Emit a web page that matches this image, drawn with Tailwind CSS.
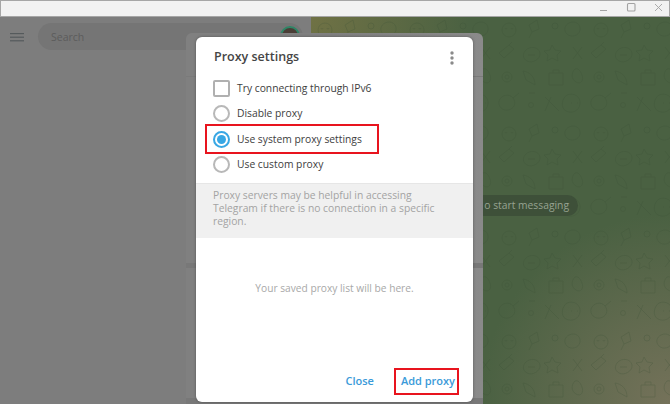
<!DOCTYPE html>
<html lang="en">
<head>
  <meta charset="UTF-8" />
  <title>Proxy settings</title>
  <script src="https://cdn.jsdelivr.net/npm/@tailwindcss/browser@4"></script>
</head>
<body class="w-[670px] h-[404px] overflow-hidden relative font-['Open_Sans',sans-serif] bg-[#7d7d7d]">

  <!-- window title bar -->
  <div class="h-[17px] bg-[#f2f2f2] border border-[#a6a6a6] flex justify-end items-center">
    <svg width="80" height="15" viewBox="0 0 80 15" fill="none" stroke="#a3a3a3" class="mr-[1px]">
      <path d="M12 9.5h7" stroke-width="1"/>
      <rect x="39.5" y="2.5" width="7.5" height="7.5" rx="1" stroke-width="1.1"/>
      <path d="M67 3l7 7M74 3l-7 7" stroke-width="0.9"/>
    </svg>
  </div>

  <div class="flex h-[387px]">
    <!-- left panel -->
    <div class="w-[311px] relative bg-[#7d7d7d] flex items-start pt-[6px] pl-[10px]">
      <svg width="14" height="12" viewBox="0 0 14 12" class="mt-[10px]" fill="#555a5c">
        <rect x="0" y="0" width="14" height="1.2"/>
        <rect x="0" y="3.6" width="14" height="1.2"/>
        <rect x="0" y="7.2" width="14" height="1.2"/>
      </svg>
      <div class="ml-[14px] w-[265px] h-[27px] rounded-full bg-[#757575] flex items-center pl-[13px] pt-[2px] text-[10.5px] text-[#5c5c5c]">Search</div>
      <div class="absolute left-[280px] top-[9px] w-[20px] h-[20px] rounded-full border-2 border-[#2f8566] bg-[#4a3d36]"></div>
    </div>
    <!-- chat background -->
    <div class="flex-1 relative overflow-hidden bg-[radial-gradient(circle_at_100%_100%,#75725a_0%,rgba(117,114,90,0)_36%),radial-gradient(circle_at_0%_0%,#707245_0%,rgba(112,114,69,0)_30%),linear-gradient(#4a6142,#4a6142)]">
      <svg class="absolute inset-0" width="359" height="387" fill="none" stroke="#3a5035" stroke-width="0.6" opacity="0.4">
        <defs>
          <pattern id="doodles" width="92" height="104" patternUnits="userSpaceOnUse">
            <circle cx="14" cy="13" r="7"/><path d="M10 11a1 1 0 0 0 2 0M16 11a1 1 0 0 0 2 0"/>
            <path d="M34 8l8-5 2 9-7 3zM37 15l-3 6"/>
            <circle cx="60" cy="9" r="3"/>
            <path d="M74 6c6-3 12 1 11 7s-9 8-13 4-2-9 2-11z"/>
            <path d="M4 36l10-8 5 4-10 9zM14 28l3-3"/>
            <path d="M30 34c5-6 14-4 15 2s-8 11-13 8-4-7-2-10zM33 38h7"/>
            <path d="M57 28l3 5 6 1-4 4 1 6-6-3-5 3 1-6-4-4 6-1z"/>
            <path d="M78 30l9 12M87 30l-9 12"/>
            <circle cx="12" cy="60" r="5"/><circle cx="12" cy="60" r="2"/>
            <path d="M28 54c7 1 12 6 12 14M28 54l3 9 9 5"/>
            <path d="M54 56h14v12h-14zM58 56v-3h6v3"/>
            <path d="M80 52c-4 4-4 10 1 13s8-2 6-7-4-7-7-6z"/>
            <path d="M4 84c2-6 10-8 14-3s1 11-5 12-10-4-9-9zM18 81l6-5"/>
            <circle cx="36" cy="88" r="2.5"/><path d="M34 76h6"/>
            <path d="M50 80l14 14M50 94l6-14"/>
            <path d="M72 78c7-3 14 2 13 9s-8 10-14 7-4-13 1-16zM76 86h1M82 86h1"/>
          </pattern>
        </defs>
        <rect width="359" height="387" fill="url(#doodles)" stroke="none"/>
      </svg>
      <div class="absolute left-[160px] top-[178px] w-[107px] h-[21px] rounded-full bg-[#3e5039] flex items-center justify-end pr-[9px] text-[10.3px] font-medium text-[#97a391]">o start messaging</div>
    </div>
  </div>

  <!-- settings box behind the dialog -->
  <div class="absolute left-[186px] top-[33px] w-[297px] h-[371px] rounded-t-[6px] bg-[linear-gradient(90deg,#808080_0%,#808080_50%,#8a8a8a_100%)]">
    <div class="absolute left-0 right-0 top-[43px] h-px bg-[#7a7a7a]"></div>
    <div class="absolute left-0 right-0 top-[230px] h-[5px] bg-[#787878]"></div>
    <div class="absolute left-0 right-0 bottom-0 h-[6px] bg-[#787878]"></div>
  </div>

  <!-- proxy dialog -->
  <div class="absolute left-[196px] top-[37px] w-[277px] h-[365px] bg-white rounded-[6px] shadow-[0_0_3px_rgba(0,0,0,0.35)] flex flex-col">
    <div class="h-[37px] flex items-center justify-between pl-[18px] pr-[18px]">
      <h1 class="mt-[3px] text-[12.5px] font-semibold text-[#454545]">Proxy settings</h1>
      <svg width="4" height="14" viewBox="0 0 4 14" fill="#8a8a8a" class="mt-[5px] mr-[1px]">
        <circle cx="2" cy="2" r="1.7"/><circle cx="2" cy="7" r="1.7"/><circle cx="2" cy="12" r="1.7"/>
      </svg>
    </div>

    <div class="pl-[17px] pt-[2px] text-[10.3px] text-[#3d3d3d]">
      <div class="h-[25px] flex items-center gap-[7px]">
        <span class="w-[17px] h-[17px] rounded-[2px] border-2 border-[#b0b0b0]"></span>
        <span>Try connecting through IPv6</span>
      </div>
      <div class="h-[25.5px] flex items-center gap-[7px]">
        <span class="w-[17px] h-[17px] rounded-full border-2 border-[#b8b8b8]"></span>
        <span>Disable proxy</span>
      </div>
      <div class="h-[25.5px] flex items-center gap-[7px]">
        <span class="w-[17px] h-[17px] rounded-full border-2 border-[#38a7e4] flex items-center justify-center">
          <span class="w-[9px] h-[9px] rounded-full bg-[#38a7e4]"></span>
        </span>
        <span>Use system proxy settings</span>
      </div>
      <div class="h-[25px] flex items-center gap-[7px]">
        <span class="w-[17px] h-[17px] rounded-full border-2 border-[#b8b8b8]"></span>
        <span>Use custom proxy</span>
      </div>
    </div>

    <div class="mt-[6px] h-[55px] bg-[#f0f0f0] border-t border-[#e6e6e6] pl-[17px] pr-[20px] pt-[5px] text-[10.3px] leading-[13px] text-[#a3a3a3]">
      Proxy servers may be helpful in accessing Telegram if there is no connection in a specific region.
    </div>

    <div class="flex-1 flex items-start justify-center pt-[43px] text-[10.2px] text-[#a8a8a8]">Your saved proxy list will be here.</div>

    <div class="h-[35px] flex items-start justify-end gap-[27px] pr-[18px] pt-[6px] text-[11px] font-semibold text-[#3a9ad9]">
      <button>Close</button>
      <button>Add proxy</button>
    </div>
  </div>

  <!-- red annotation boxes -->
  <div class="absolute left-[205px] top-[124px] w-[174px] h-[30px] border-2 border-[#e8141e]"></div>
  <div class="absolute left-[394px] top-[368px] w-[65px] h-[27px] border-2 border-[#e8141e]"></div>

</body>
</html>
